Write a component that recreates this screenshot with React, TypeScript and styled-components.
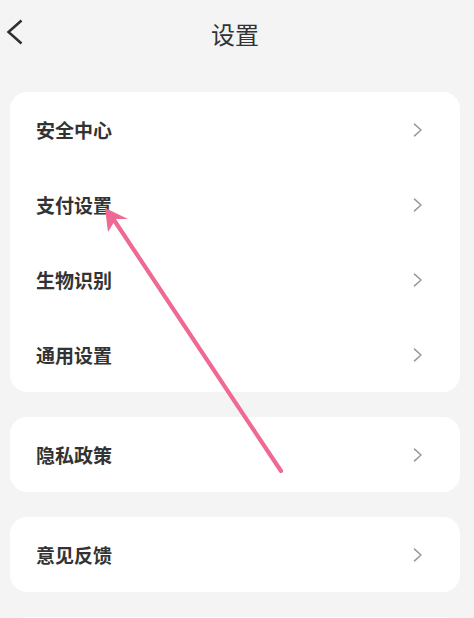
import React from "react";
import styled, { createGlobalStyle } from "styled-components";

const GlobalStyle = createGlobalStyle`
  html, body {
    margin: 0;
    padding: 0;
    background: #f4f4f4;
  }
  body {
    font-family: "Noto Sans CJK SC", "Noto Sans", sans-serif;
    color: #333333;
  }
  * { box-sizing: border-box; }
`;

const Page = styled.div`
  position: relative;
  width: 474px;
  min-height: 618px;
  background: #f4f4f4;
  padding: 0 14px 40px 10px;
`;

const Header = styled.header`
  position: relative;
  height: 66px;
  display: flex;
  align-items: center;
  justify-content: center;
`;

const BackButton = styled.button`
  position: absolute;
  left: -4px;
  top: 19px;
  width: 18px;
  height: 26px;
  padding: 0;
  border: none;
  background: transparent;
  display: flex;
  align-items: center;
  justify-content: center;
`;

const Title = styled.h1`
  margin: 0;
  font-size: 24px;
  font-weight: 400;
  color: #333333;
  letter-spacing: 0;
`;

const Content = styled.div`
  margin-top: 26px;
  display: flex;
  flex-direction: column;
  gap: 25px;
`;

const Card = styled.section`
  background: #ffffff;
  border-radius: 17px;
  overflow: hidden;
`;

const Row = styled.div`
  height: 75px;
  display: flex;
  align-items: center;
  justify-content: space-between;
  padding: 0 37px 0 26px;
`;

const Label = styled.span`
  font-size: 19px;
  font-weight: 700;
  color: #333333;
  line-height: 1;
`;

const Chevron = styled.svg`
  width: 10px;
  height: 14px;
  display: block;
`;

const ArrowOverlay = styled.svg`
  position: absolute;
  left: 0;
  top: 0;
  width: 474px;
  height: 618px;
  pointer-events: none;
`;

const RowItem = ({ label }: { label: string }) => (
  <Row>
    <Label>{label}</Label>
    <Chevron viewBox="0 0 10 14">
      <polyline
        points="1.5,1.2 8,7 1.5,12.8"
        fill="none"
        stroke="#9a9a9a"
        strokeWidth="1.6"
        strokeLinecap="round"
        strokeLinejoin="round"
      />
    </Chevron>
  </Row>
);

const groups: string[][] = [
  ["安全中心", "支付设置", "生物识别", "通用设置"],
  ["隐私政策"],
  ["意见反馈"],
];

export default function App() {
  return (
    <>
      <GlobalStyle />
      <Page>
        <Header>
          <BackButton aria-label="返回">
            <svg width="18" height="26" viewBox="0 0 18 26">
              <polyline
                points="15.5,1.5 2.5,13 15.5,24.5"
                fill="none"
                stroke="#2e2e2e"
                strokeWidth="2.5"
                strokeLinejoin="miter"
              />
            </svg>
          </BackButton>
          <Title>设置</Title>
        </Header>
        <Content>
          {groups.map((g, i) => (
            <Card key={i}>
              {g.map((label) => (
                <RowItem key={label} label={label} />
              ))}
            </Card>
          ))}
          <Card>
            <Row />
          </Card>
        </Content>
        <ArrowOverlay viewBox="0 0 474 618">
          <line
            x1="281"
            y1="471"
            x2="112"
            y2="217"
            stroke="#ef6a93"
            strokeWidth="4.2"
            strokeLinecap="round"
          />
          <polygon
            points="105,208 128,219 116,219 108,232"
            fill="#ef6a93"
          />
        </ArrowOverlay>
      </Page>
    </>
  );
}
